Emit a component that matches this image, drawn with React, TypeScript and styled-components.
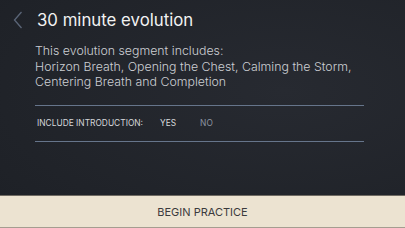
import styled, { createGlobalStyle } from 'styled-components';

const GlobalStyle = createGlobalStyle`
  html, body {
    margin: 0;
    padding: 0;
    background: #22252b;
  }
  * {
    box-sizing: border-box;
  }
`;

const App = () => {
  return (
    <>
      <GlobalStyle />
      <Screen>
        <Content>
          <Header>
            <BackButton aria-label="back">
              <svg width="10" height="18" viewBox="0 0 10 18" fill="none">
                <path d="M8.5 1 L1.5 9 L8.5 17" stroke="#5b6678" strokeWidth="1.3" />
              </svg>
            </BackButton>
            <Title>30 minute evolution</Title>
          </Header>

          <Description>
            This evolution segment includes:
            <br />
            Horizon Breath, Opening the Chest, Calming the Storm,
            <br />
            Centering Breath and Completion
          </Description>

          <OptionRow>
            <OptionLabel>INCLUDE INTRODUCTION:</OptionLabel>
            <Choice $active>YES</Choice>
            <Choice>NO</Choice>
          </OptionRow>
        </Content>

        <BeginBar>BEGIN PRACTICE</BeginBar>
      </Screen>
    </>
  );
};

export default App;

const Screen = styled.div`
  width: 405px;
  height: 228px;
  display: flex;
  flex-direction: column;
  background: radial-gradient(ellipse at 70% 40%, #272a31 0%, #202329 70%, #1d2026 100%);
  font-family: Inter, 'Open Sans', sans-serif;
  overflow: hidden;
`;

const Content = styled.div`
  flex: 1;
  padding: 0 41px 0 35px;
`;

const Header = styled.div`
  display: flex;
  align-items: center;
  height: 40px;
  margin-left: -22px;
  gap: 14px;
`;

const BackButton = styled.button`
  border: 0;
  background: none;
  padding: 0;
  width: 10px;
  height: 18px;
  display: flex;
`;

const Title = styled.h1`
  margin: 0;
  font-size: 16.8px;
  font-weight: 400;
  color: #f2f2f2;
`;

const Description = styled.p`
  margin: 3px 0 0;
  font-size: 12.35px;
  line-height: 15.6px;
  font-weight: 300;
  color: #ccced3;
  white-space: nowrap;
`;

const OptionRow = styled.div`
  margin-top: 15px;
  height: 37px;
  display: flex;
  align-items: center;
  border-top: 1px solid #66758b;
  border-bottom: 1px solid #66758b;
  padding-left: 2px;
`;

const OptionLabel = styled.span`
  font-size: 8.4px;
  color: #d4d6da;
  margin-right: 17px;
`;

const Choice = styled.span<{ $active?: boolean }>`
  font-size: 8.4px;
  color: ${(p) => (p.$active ? '#d8dadd' : '#8d95a2')};
  margin-right: 24px;
`;

const BeginBar = styled.div`
  height: 33px;
  display: flex;
  align-items: center;
  justify-content: center;
  background: #ece3d1;
  border-top: 1px solid #6f6a62;
  border-bottom: 1px solid #a59d90;
  font-size: 11px;
  color: #3b3b3d;
`;
